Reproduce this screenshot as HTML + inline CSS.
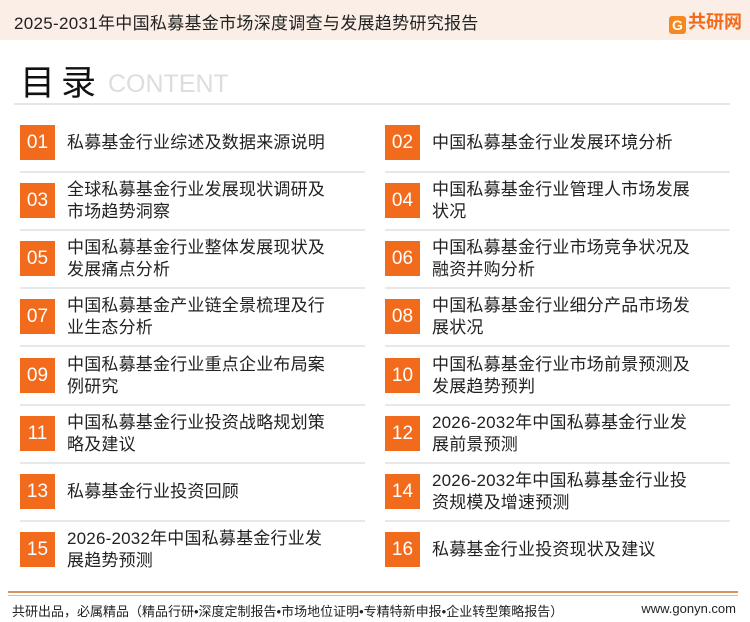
<!DOCTYPE html>
<html><head><meta charset="utf-8"><style>
body{margin:0;width:750px;height:622px;background:#fff;font-family:"Liberation Sans","Noto Sans CJK SC",sans-serif;position:relative;overflow:hidden;color:#222}
.hd{position:absolute;left:0;top:0;width:750px;height:40px;background:#fbeee6}
.hd .t{position:absolute;left:14px;top:9px;font-size:17px;color:#222;letter-spacing:0.3px}
.logo{position:absolute;right:8px;top:8px;font-size:18px;font-weight:bold;color:#f26b1d}
.logo b{display:inline-block;width:17px;height:18px;background:#f5891f;border-radius:3px;color:#fff;font-size:14px;text-align:center;line-height:18px;margin-right:2px;vertical-align:-2px}
.ttl{position:absolute;left:20px;top:55px;font-size:35px;color:#111;letter-spacing:6px}
.ct{position:absolute;left:108px;top:70px;font-size:25px;color:#ddd}
.ln{position:absolute;left:14px;top:103px;width:716px;height:2px;background:#e6e6e6}
.it{position:absolute;width:345px;height:58px}
.it .n{position:absolute;left:0;top:0;width:35px;height:35px;background:#f26b1d;color:#fff;font-size:19px;text-align:center;line-height:35px}
.it .x{position:absolute;left:47px;top:0;height:35px;display:flex;align-items:center;font-size:17px;line-height:22px;width:262px;letter-spacing:0.2px}
.it .d{position:absolute;left:0;top:46px;width:345px;height:2px;background:#e8e8e8}
.f1{position:absolute;left:8px;top:591px;width:730px;height:2px;background:#d6955f}
.f2{position:absolute;left:8px;top:595px;width:730px;height:1px;background:#e5b996}
.ft{position:absolute;left:12px;top:601px;font-size:13px;color:#222}
.fr{position:absolute;right:14px;top:601px;font-size:13px;color:#222}
</style></head><body>
<div class="hd"><div class="t">2025-2031年中国私募基金市场深度调查与发展趋势研究报告</div><div class="logo"><b>G</b>共研网</div></div>
<div class="ttl">目录</div><div class="ct">CONTENT</div>
<div class="ln"></div>

<div class="it" style="left:20px;top:125px"><div class="n">01</div><div class="x">私募基金行业综述及数据来源说明</div><div class="d"></div></div>
<div class="it" style="left:385px;top:125px"><div class="n">02</div><div class="x">中国私募基金行业发展环境分析</div><div class="d"></div></div>
<div class="it" style="left:20px;top:183px"><div class="n">03</div><div class="x">全球私募基金行业发展现状调研及市场趋势洞察</div><div class="d"></div></div>
<div class="it" style="left:385px;top:183px"><div class="n">04</div><div class="x">中国私募基金行业管理人市场发展状况</div><div class="d"></div></div>
<div class="it" style="left:20px;top:241px"><div class="n">05</div><div class="x">中国私募基金行业整体发展现状及发展痛点分析</div><div class="d"></div></div>
<div class="it" style="left:385px;top:241px"><div class="n">06</div><div class="x">中国私募基金行业市场竞争状况及融资并购分析</div><div class="d"></div></div>
<div class="it" style="left:20px;top:299px"><div class="n">07</div><div class="x">中国私募基金产业链全景梳理及行业生态分析</div><div class="d"></div></div>
<div class="it" style="left:385px;top:299px"><div class="n">08</div><div class="x">中国私募基金行业细分产品市场发展状况</div><div class="d"></div></div>
<div class="it" style="left:20px;top:358px"><div class="n">09</div><div class="x">中国私募基金行业重点企业布局案例研究</div><div class="d"></div></div>
<div class="it" style="left:385px;top:358px"><div class="n">10</div><div class="x">中国私募基金行业市场前景预测及发展趋势预判</div><div class="d"></div></div>
<div class="it" style="left:20px;top:416px"><div class="n">11</div><div class="x">中国私募基金行业投资战略规划策略及建议</div><div class="d"></div></div>
<div class="it" style="left:385px;top:416px"><div class="n">12</div><div class="x">2026-2032年中国私募基金行业发展前景预测</div><div class="d"></div></div>
<div class="it" style="left:20px;top:474px"><div class="n">13</div><div class="x">私募基金行业投资回顾</div><div class="d"></div></div>
<div class="it" style="left:385px;top:474px"><div class="n">14</div><div class="x">2026-2032年中国私募基金行业投资规模及增速预测</div><div class="d"></div></div>
<div class="it" style="left:20px;top:532px"><div class="n">15</div><div class="x">2026-2032年中国私募基金行业发展趋势预测</div></div>
<div class="it" style="left:385px;top:532px"><div class="n">16</div><div class="x">私募基金行业投资现状及建议</div></div>

<div class="f1"></div><div class="f2"></div>
<div class="ft">共研出品，必属精品（精品行研•深度定制报告•市场地位证明•专精特新申报•企业转型策略报告）</div>
<div class="fr">www.gonyn.com</div>
</body></html>
